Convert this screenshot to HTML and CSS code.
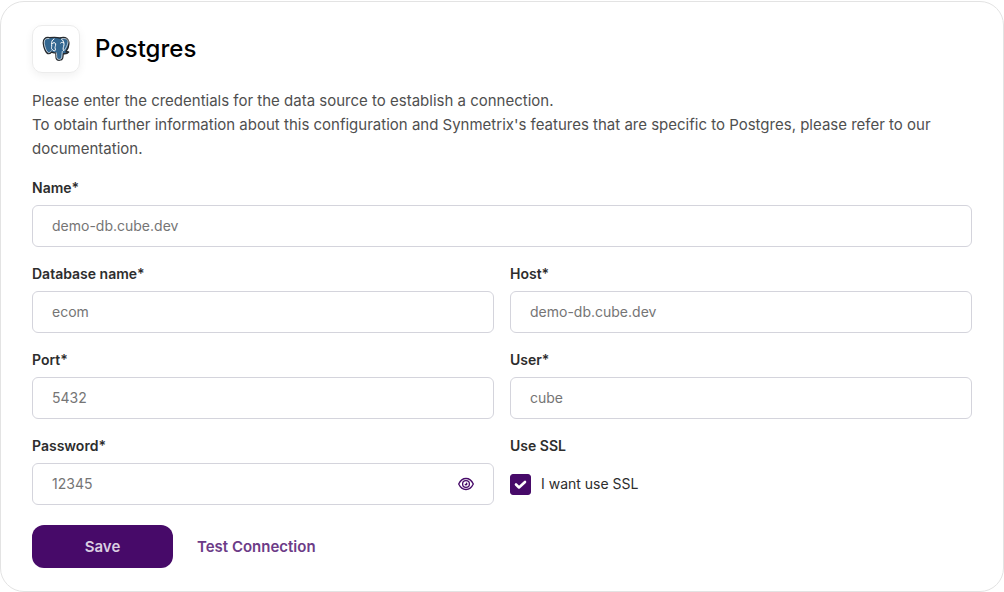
FILE: index.html
```html
<!DOCTYPE html>
<html lang="en">
<head>
<meta charset="utf-8">
<meta name="viewport" content="width=device-width, initial-scale=1">
<title>Postgres</title>
<link rel="stylesheet" href="styles.css">
</head>
<body>
<main class="card">
  <header class="header">
    <span class="logo">
      <svg width="28" height="26" viewBox="0 0 84 78" aria-hidden="true">
        <path d="M22 5C10 3 3 9 4 22c1 13 8 31 16 31 4 0 6-2 9-5 4 3 8 3 12 2 2 6 0 12 2 18 3 7 17 6 19-2 1-5 1-9 2-13 8 1 13-1 16-5-3-1-6-1-8-2 7-10 10-21 8-29C77 5 65 3 53 6 43 3 32 4 22 5Z" fill="#336791" stroke="#25292d" stroke-width="4" stroke-linejoin="round"/>
        <path d="M22 8C11 6 6 11 7 22c1 12 8 28 13 28 3 0 6-3 9-6M60 8c13-2 19 3 18 10-1 9-6 18-11 25M42 49c3 7 1 12 3 18 3 5 13 4 14-1 2-8 0-15 2-21" fill="none" stroke="#fff" stroke-width="2"/>
        <path d="M36 9c-6 3-8 8-7 17 1 8-3 10 2 15 5 5 11 4 9-2-3-5 2-9 1-16-2-4-7-4-11 0M58 9c6 4 8 9 8 17 0 7-6 11-1 18M56 21c3-3 6-3 9-1" fill="none" stroke="#fff" stroke-width="3" stroke-linecap="round" stroke-linejoin="round"/>
      </svg>
    </span>
    <h1 class="title">Postgres</h1>
  </header>
  <p class="intro">Please enter the credentials for the data source to establish a connection.<br>To obtain further information about this configuration and Synmetrix's features that are specific to Postgres, please refer to our documentation.</p>
  <form class="form">
    <div class="field wide">
      <label class="label" for="name">Name*</label>
      <input class="input" id="name" type="text" placeholder="demo-db.cube.dev">
    </div>
    <div class="field">
      <label class="label" for="database">Database name*</label>
      <input class="input" id="database" type="text" placeholder="ecom">
    </div>
    <div class="field">
      <label class="label" for="host">Host*</label>
      <input class="input" id="host" type="text" placeholder="demo-db.cube.dev">
    </div>
    <div class="field">
      <label class="label" for="port">Port*</label>
      <input class="input" id="port" type="text" placeholder="5432">
    </div>
    <div class="field">
      <label class="label" for="user">User*</label>
      <input class="input" id="user" type="text" placeholder="cube">
    </div>
    <div class="field">
      <label class="label" for="password">Password*</label>
      <div class="input password">
        <input class="bare" id="password" type="password" placeholder="12345">
        <button class="reveal" type="button" aria-label="Show password">
          <svg width="16" height="14" viewBox="0 0 16 14" fill="none" stroke="#470a69" stroke-width="1.300" aria-hidden="true">
            <path d="M.7 7C2.400 3.300 5 1.500 8 1.500S13.600 3.300 15.300 7C13.600 10.700 11 12.500 8 12.500S2.400 10.700.7 7Z"/>
            <circle cx="8" cy="7" r="3.400"/>
            <path d="M8 5.600A1.500 1.500 0 1 1 6.500 7.200C7.500 7.300 8.100 6.600 8 5.600Z" fill="#470a69" stroke="none"/>
          </svg>
        </button>
      </div>
    </div>
    <fieldset class="field group">
      <legend class="label">Use SSL</legend>
      <label class="check"><input class="box" type="checkbox" checked><svg class="tick" width="21" height="21" viewBox="0 0 21 21" fill="none" stroke="#fff" stroke-width="2.600" stroke-linecap="round" stroke-linejoin="round" aria-hidden="true"><path d="M6 10.500l3 3 6-5.500"/></svg><span>I want use SSL</span></label>
    </fieldset>
    <div class="actions wide">
      <button class="save" type="submit">Save</button>
      <button class="test" type="button">Test Connection</button>
    </div>
  </form>
</main>
</body>
</html>
```
FILE: styles.css
```css
*, *::before, *::after { box-sizing: border-box; }
body {
  margin: 0;
  padding-top: 1px;
  background: #fff;
  color: #2d2d2d;
  font: 14px/22px Inter, "Liberation Sans", sans-serif;
}
button, input { font: inherit; }
.card {
  padding: 23px 31px;
  border: 1px solid #e3e3e3;
  border-radius: 24px;
}
.header { display: flex; align-items: center; gap: 15px; }
.logo {
  display: grid;
  place-items: center;
  width: 48px;
  height: 48px;
  border: 1px solid #ececec;
  border-radius: 10px;
  box-shadow: 0 3px 8px rgba(0, 0, 0, .06);
}
.title { margin: 0; color: #000; font-size: 24px; line-height: 32px; font-weight: 500; }
.intro { margin: 16px 0; color: #4f4f4f; font-size: 15px; line-height: 24px; }
.form { display: grid; grid-template-columns: 1fr 1fr; gap: 16px; }
.wide { grid-column: 1 / -1; }
.field { display: flex; flex-direction: column; gap: 6px; min-width: 0; }
.label { padding: 0; font-weight: 600; }
.input {
  width: 100%;
  height: 42px;
  padding: 0 19px 2px;
  border: 1px solid #d4d4dc;
  border-radius: 6px;
  background: #fff;
}
.input::placeholder, .bare::placeholder { color: #757575; opacity: 1; }
.password { display: flex; align-items: center; padding-bottom: 0; }
.bare { flex: 1; min-width: 0; padding: 0; border: 0; outline: 0; background: none; }
.reveal { display: flex; padding: 0; border: 0; background: none; cursor: pointer; }
.group { display: block; margin: 0; padding: 0; border: 0; }
.check { display: flex; align-items: center; gap: 10px; height: 42px; margin-top: 6px; }
.box {
  appearance: none;
  width: 21px;
  height: 21px;
  margin: 0;
  border-radius: 3px;
  border: 1px solid #470a69;
}
.box:checked { background: #470a69; }
.tick { margin-left: -31px; pointer-events: none; }
.actions { display: flex; align-items: center; gap: 24px; padding-top: 4px; }
.save {
  width: 141px;
  height: 43px;
  border: 0;
  border-radius: 12px;
  background: #470a69;
  color: #dacee1;
  font-size: 15px;
  font-weight: 600;
}
.test { padding: 0; border: 0; background: none; color: #6c3b87; font-size: 15px; font-weight: 600; }
```
